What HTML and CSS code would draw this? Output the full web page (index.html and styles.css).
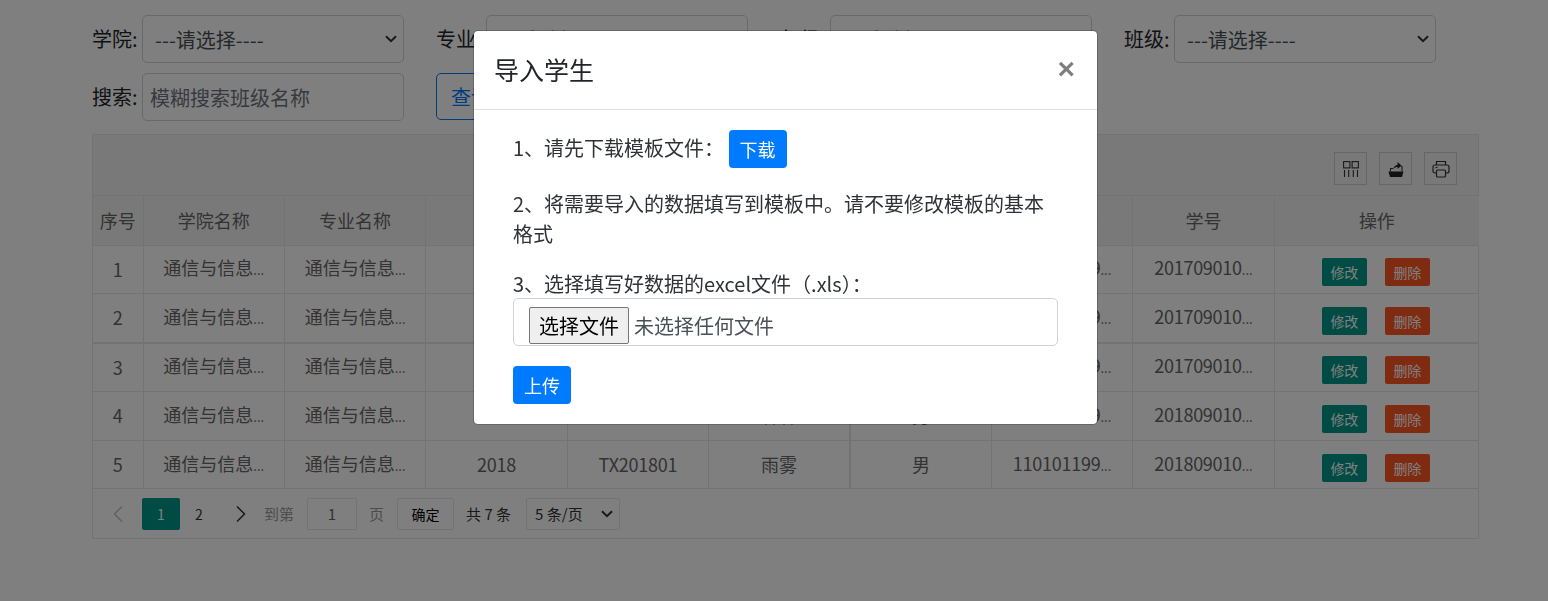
FILE: index.html
```html
<!DOCTYPE html>
<html lang="zh-CN">
<head>
<meta charset="utf-8">
<title>导入学生</title>
<link rel="stylesheet" href="styles.css">
</head>
<body>
<main class="page">
  <form class="filters">
    <div class="field"><label class="field-label">学院:</label><select class="control chevron"><option>---请选择----</option></select></div>
    <div class="field"><label class="field-label">专业:</label><select class="control chevron"><option>---请选择----</option></select></div>
    <div class="field"><label class="field-label">年级:</label><select class="control chevron"><option>---请选择----</option></select></div>
    <div class="field"><label class="field-label">班级:</label><select class="control chevron"><option>---请选择----</option></select></div>
    <div class="field"><label class="field-label">搜索:</label><input class="control search" placeholder="模糊搜索班级名称"></div>
    <div class="field"><button type="button" class="query">查询</button></div>
  </form>

  <section class="grid">
    <div class="toolbar">
      <span class="tool"><svg viewBox="0 0 16 16" width="16" height="16"><g fill="none" stroke="#333" stroke-width="1.100"><rect x="0.600" y="0.600" width="6.300" height="6.300"/><rect x="9.100" y="0.600" width="6.300" height="6.300"/><path d="M1.500 9v7M5.700 9v7M10.300 9v7M14.500 9v7"/></g></svg></span>
      <span class="tool"><svg viewBox="0 0 16 16" width="16" height="16"><path d="M0.500 10.500h15l-1.500 5.500H2z" fill="#222"/><path d="M2.500 10.500V7.500h2.500 M14 10.500V5.500h-1" fill="none" stroke="#333" stroke-width="1.100"/><path d="M5.500 8.500C5.500 5.500 7.500 4 9.500 4V1l4 3.500-4 3.500V5.800C7.800 5.800 6.500 6.800 5.500 8.500z" fill="#222"/></svg></span>
      <span class="tool"><svg viewBox="0 0 18 18" width="18" height="18"><g fill="none" stroke="#333" stroke-width="1.200"><path d="M4.500 5V1.500h9V5"/><rect x="1" y="5" width="16" height="8" rx="2"/><rect x="4.500" y="10" width="9" height="7" rx="1" fill="#f2f2f2"/><path d="M3.500 7.500h2"/></g></svg></span>
    </div>
    <table class="data">
      <thead>
        <tr><th>序号</th><th>学院名称</th><th>专业名称</th><th>年级</th><th>班级</th><th>姓名</th><th>性别</th><th>身份证号</th><th>学号</th><th>操作</th></tr>
      </thead>
      <tbody>
        <tr><td>1</td><td>通信与信息<span class="dots">...</span></td><td>通信与信息<span class="dots">...</span></td><td class="num">2017</td><td class="num">TX201701</td><td>张明</td><td>男</td><td class="num">110101199<span class="dots">...</span></td><td class="num">201709010<span class="dots">...</span></td><td><span class="acts"><button type="button" class="act edit">修改</button><button type="button" class="act del">删除</button></span></td></tr>
        <tr><td>2</td><td>通信与信息<span class="dots">...</span></td><td>通信与信息<span class="dots">...</span></td><td class="num">2017</td><td class="num">TX201701</td><td>李华</td><td>女</td><td class="num">110101199<span class="dots">...</span></td><td class="num">201709010<span class="dots">...</span></td><td><span class="acts"><button type="button" class="act edit">修改</button><button type="button" class="act del">删除</button></span></td></tr>
        <tr><td>3</td><td>通信与信息<span class="dots">...</span></td><td>通信与信息<span class="dots">...</span></td><td class="num">2017</td><td class="num">TX201701</td><td>王强</td><td>男</td><td class="num">110101199<span class="dots">...</span></td><td class="num">201709010<span class="dots">...</span></td><td><span class="acts"><button type="button" class="act edit">修改</button><button type="button" class="act del">删除</button></span></td></tr>
        <tr><td>4</td><td>通信与信息<span class="dots">...</span></td><td>通信与信息<span class="dots">...</span></td><td class="num">2018</td><td class="num">TX201801</td><td>林林</td><td>男</td><td class="num">110101199<span class="dots">...</span></td><td class="num">201809010<span class="dots">...</span></td><td><span class="acts"><button type="button" class="act edit">修改</button><button type="button" class="act del">删除</button></span></td></tr>
        <tr><td>5</td><td>通信与信息<span class="dots">...</span></td><td>通信与信息<span class="dots">...</span></td><td class="num">2018</td><td class="num">TX201801</td><td>雨雾</td><td>男</td><td class="num">110101199<span class="dots">...</span></td><td class="num">201809010<span class="dots">...</span></td><td><span class="acts"><button type="button" class="act edit">修改</button><button type="button" class="act del">删除</button></span></td></tr>
      </tbody>
    </table>
    <nav class="pager">
      <span class="arrow first"><svg viewBox="0 0 12 18" width="12" height="18"><path d="M10 1.500 2.500 9l7.500 7.500" fill="none" stroke="#c2c2c2" stroke-width="1.500"/></svg></span>
      <span class="page-no current">1</span>
      <span class="page-no">2</span>
      <span class="arrow next"><svg viewBox="0 0 12 18" width="12" height="18"><path d="M2 1.500 9.500 9 2 16.500" fill="none" stroke="#333" stroke-width="1.500"/></svg></span>
      <span class="pager-text muted goto">到第</span>
      <span class="page-input">1</span>
      <span class="pager-text muted unit">页</span>
      <button type="button" class="confirm">确定</button>
      <span class="pager-text total">共 7 条</span>
      <select class="limit chevron"><option>5 条/页</option></select>
    </nav>
  </section>
</main>

<div class="backdrop">
  <div class="modal">
    <header class="modal-head">
      <h5 class="modal-title">导入学生</h5>
      <span class="close">×</span>
    </header>
    <div class="modal-body">
      <p class="step first-step">1、请先下载模板文件： <button type="button" class="primary">下载</button></p>
      <p class="step">2、将需要导入的数据填写到模板中。请不要修改模板的基本格式</p>
      <p class="step third-step">3、选择填写好数据的excel文件（.xls）：</p>
      <div class="file-box"><span class="file-btn">选择文件</span><span class="file-name">未选择任何文件</span></div>
      <button type="button" class="primary upload">上传</button>
    </div>
  </div>
</div>
</body>
</html>
```

FILE: styles.css
```css
* { box-sizing: border-box; }
html, body { margin: 0; height: 100%; overflow: hidden; }
body {
  background: #fff;
  color: #212529;
  font-family: "Noto Sans CJK SC", "Noto Sans", sans-serif;
  font-size: 20px;
  line-height: 30px;
}
.page { padding: 15px 69px 0 92px; }

.filters {
  display: grid;
  grid-template-columns: repeat(4, 312px);
  grid-auto-rows: 48px;
  gap: 10px 32px;
}
.field { display: flex; align-items: center; }
.field-label { width: 50px; flex: none; }
.control {
  width: 262px;
  height: 48px;
  border: 1px solid #ced4da;
  border-radius: 5px;
  background: #fff;
  color: #495057;
  font: inherit;
  padding: 2px 12px 0;
}
.chevron {
  appearance: none;
  background-image: url("data:image/svg+xml,%3Csvg xmlns='http://www.w3.org/2000/svg' width='12' height='8' viewBox='0 0 12 8'%3E%3Cpath d='M1 1.200 6 6.200l5-5' fill='none' stroke='%23333' stroke-width='2'/%3E%3C/svg%3E");
  background-repeat: no-repeat;
  background-position: right 6px center;
}
.search { padding: 0 7px; }
.search::placeholder { color: #6c757d; opacity: 1; }
.query {
  height: 47px;
  width: 70px;
  margin-bottom: 1px;
  border: 1px solid #007bff;
  border-radius: 5px;
  background: #fff;
  color: #007bff;
  font: inherit;
}

.grid { margin-top: 13px; width: 1387px; border: 1px solid #e6e6e6; }
.toolbar {
  height: 61px;
  padding: 17px 21px 0 0;
  display: flex;
  justify-content: flex-end;
  gap: 12px;
  background: #f2f2f2;
  border-bottom: 1px solid #e6e6e6;
}
.tool {
  width: 33px;
  height: 33px;
  border: 1px solid #ccc;
  display: flex;
  align-items: center;
  justify-content: center;
}

.data {
  width: 100%;
  table-layout: fixed;
  border-collapse: collapse;
  font-size: 18px;
  color: #666;
}
.data th, .data td {
  border: 1px solid #e6e6e6;
  padding: 0 15px 1px;
  text-align: center;
  font-weight: 400;
  white-space: nowrap;
}
.data th { padding-bottom: 0; }
.data tr > :first-child { border-left: 0; width: 50px; padding-left: 0; padding-right: 0; }
.data tr > :last-child { border-right: 0; width: 205px; }
.data th:nth-child(n+2):nth-child(-n+9) { width: 141.4px; }
.data thead tr { height: 49px; background: #f2f2f2; }
.data thead th { border-top: 0; }
.data tbody tr { height: 48.8px; }
.data tbody td:nth-child(6) { border-right-width: 2px; }
.data tbody tr:nth-child(2) td { border-bottom-width: 2px; }
.num { letter-spacing: -.25px; }
.dots { font-size: 13px; letter-spacing: 0; }

.acts { display: inline-flex; gap: 18px; vertical-align: middle; margin: 6px 2px 0 0; }
.act {
  width: 45px;
  height: 28px;
  padding: 0;
  border: 0;
  border-radius: 2px;
  color: #fff;
  font: inherit;
  font-size: 14px;
  line-height: 28px;
}
.edit { background: #009688; }
.del { background: #ff5722; }

.pager {
  height: 49px;
  display: flex;
  align-items: center;
  padding: 0 0 0 19px;
  font-size: 15px;
  color: #333;
}
.arrow { display: flex; width: 12px; }
.page-no { width: 38px; height: 32px; text-align: center; line-height: 32px; font-size: 14px; }
.current { margin-left: 18px; background: #009688; color: #fff; border-radius: 2px; }
.next { margin-left: 17px; }
.pager-text { white-space: nowrap; }
.muted { color: #999; }
.goto { margin-left: 17px; }
.page-input {
  margin-left: 13px;
  width: 50px;
  height: 32px;
  border: 1px solid #e6e6e6;
  border-radius: 2px;
  text-align: center;
  line-height: 30px;
  color: #666;
}
.unit { margin-left: 12px; }
.confirm {
  margin-left: 13px;
  width: 57px;
  height: 32px;
  padding: 0;
  border: 1px solid #e6e6e6;
  border-radius: 2px;
  background: #fff;
  color: #000;
  font: inherit;
  font-size: 14px;
}
.total { margin-left: 12px; }
.limit {
  margin-left: 15px;
  width: 94px;
  height: 32px;
  border: 1px solid #e6e6e6;
  border-radius: 2px;
  background-color: #fff;
  color: #333;
  font: inherit;
  padding: 0 8px;
}

.backdrop {
  position: fixed;
  inset: 0;
  background: rgba(0, 0, 0, .5);
  display: flex;
  justify-content: center;
  align-items: flex-start;
  padding: 30px 0 0 23px;
}
.modal {
  width: 625px;
  border: 1px solid rgba(0, 0, 0, .2);
  border-radius: 5px;
  background: #fff;
  background-clip: padding-box;
}
.modal-head {
  height: 79px;
  display: flex;
  justify-content: space-between;
  align-items: center;
  padding: 0 22px 2px 20px;
  border-bottom: 1px solid #dee2e6;
}
.modal-title { margin: 0; font-size: 25px; font-weight: 400; line-height: 36px; }
.close {
  font-family: "Liberation Sans", sans-serif;
  font-size: 30px;
  font-weight: 700;
  color: #000;
  opacity: .5;
  line-height: 1;
}
.modal-body { padding: 20px 39px; color: #2f3338; }
.step { margin: 0 0 20px; }
.first-step { height: 40px; line-height: 36px; margin-bottom: 19px; }
.third-step { margin: 0; height: 29px; line-height: 30px; }
.primary {
  width: 58px;
  height: 38px;
  padding: 0;
  border: 0;
  border-radius: 4px;
  background: #007bff;
  color: #fff;
  font: inherit;
  font-size: 18px;
  line-height: 38px;
  vertical-align: top;
}
.file-box {
  height: 48px;
  border: 1px solid #ced4da;
  border-radius: 5px;
  padding: 8px 0 0 15px;
  display: flex;
  align-items: flex-start;
  color: #495057;
}
.file-btn {
  width: 100px;
  height: 37px;
  border: 1px solid #767676;
  border-radius: 2px;
  background: #efefef;
  color: #000;
  text-align: center;
  line-height: 35px;
}
.file-name { margin-left: 5px; line-height: 37px; }
.upload { display: block; margin-top: 20px; }
```
